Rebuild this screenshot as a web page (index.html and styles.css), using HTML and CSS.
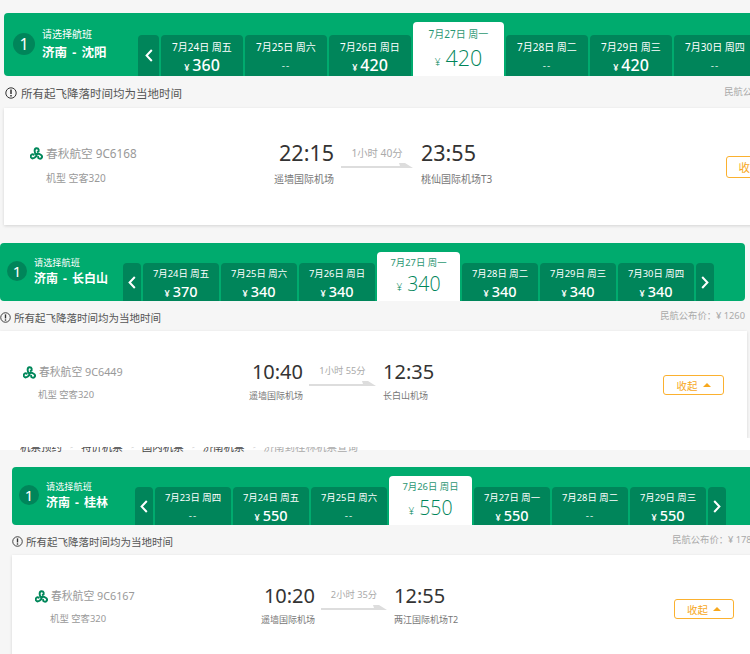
FILE: index.html
```html
<!DOCTYPE html>
<html lang="zh-CN">
<head>
    <meta charset="UTF-8">
    <title>请选择航班</title>
    <link rel="stylesheet" href="styles.css">
</head>
<body>
    <svg class="defs" width="0" height="0">
        <symbol id="logo" viewBox="0 0 14 14">
            <g fill="none" stroke="#00875a" stroke-width="2.1" stroke-linecap="round">
                <path d="M7 8C4.4 7 4.2 1.6 7 1.3C9.6 1.1 10.2 4.4 8.3 5.3"/>
                <path d="M7 8C4.4 7 4.2 1.6 7 1.3C9.6 1.1 10.2 4.4 8.3 5.3" transform="rotate(120 7 8)"/>
                <path d="M7 8C4.4 7 4.2 1.6 7 1.3C9.6 1.1 10.2 4.4 8.3 5.3" transform="rotate(240 7 8)"/>
            </g>
        </symbol>
        <symbol id="info" viewBox="0 0 12 12">
            <circle cx="6" cy="6" r="5.2" fill="none" stroke="#333" stroke-width="1"/>
            <path d="M6 2.6V7" stroke="#333" stroke-width="1.5"/>
            <path d="M6 8V9.5" stroke="#333" stroke-width="1.5"/>
        </symbol>
        <symbol id="prev" viewBox="0 0 8 13">
            <path d="M6.8 1L1.6 6.5L6.8 12" fill="none" stroke="#fff" stroke-width="2"/>
        </symbol>
        <symbol id="next" viewBox="0 0 8 13">
            <path d="M1.2 1L6.4 6.5L1.2 12" fill="none" stroke="#fff" stroke-width="2"/>
        </symbol>
    </svg>

    <!-- first search -->
    <section class="leg leg-large">
        <div class="bar">
            <div class="route">
                <span class="step">1</span>
                <div>
                    <p class="route-tip">请选择航班</p>
                    <p class="route-name">济南 - 沈阳</p>
                </div>
            </div>
            <a class="nav"><svg class="chevron"><use href="#prev"/></svg></a>
            <div class="tab"><p class="date">7月24日 周五</p><p class="price"><small>¥</small>360</p></div>
            <div class="tab"><p class="date">7月25日 周六</p><p class="price none">--</p></div>
            <div class="tab"><p class="date">7月26日 周日</p><p class="price"><small>¥</small>420</p></div>
            <div class="tab active"><p class="date">7月27日 周一</p><p class="price"><small>¥</small>420</p></div>
            <div class="tab"><p class="date">7月28日 周二</p><p class="price none">--</p></div>
            <div class="tab"><p class="date">7月29日 周三</p><p class="price"><small>¥</small>420</p></div>
            <div class="tab"><p class="date">7月30日 周四</p><p class="price none">--</p></div>
        </div>
        <div class="note">
            <p class="note-text"><svg class="info-icon"><use href="#info"/></svg>所有起飞降落时间均为当地时间</p>
            <p class="fare">民航公布价：¥ 1260</p>
        </div>
        <div class="card">
            <div class="airline">
                <p class="airline-name"><svg class="logo"><use href="#logo"/></svg>春秋航空 9C6168</p>
                <p class="plane">机型 空客320</p>
            </div>
            <div class="dep">
                <p class="time">22:15</p>
                <p class="airport">遥墙国际机场</p>
            </div>
            <div class="duration">
                <p>1小时 40分</p>
                <div class="arrow"></div>
            </div>
            <div class="arr">
                <p class="time">23:55</p>
                <p class="airport">桃仙国际机场T3</p>
            </div>
            <a class="fold">收起<i class="caret"></i></a>
        </div>
    </section>

    <!-- second search -->
    <section class="leg leg-second">
        <div class="bar">
            <div class="route">
                <span class="step">1</span>
                <div>
                    <p class="route-tip">请选择航班</p>
                    <p class="route-name">济南 - 长白山</p>
                </div>
            </div>
            <a class="nav"><svg class="chevron"><use href="#prev"/></svg></a>
            <div class="tab"><p class="date">7月24日 周五</p><p class="price"><small>¥</small>370</p></div>
            <div class="tab"><p class="date">7月25日 周六</p><p class="price"><small>¥</small>340</p></div>
            <div class="tab"><p class="date">7月26日 周日</p><p class="price"><small>¥</small>340</p></div>
            <div class="tab active"><p class="date">7月27日 周一</p><p class="price"><small>¥</small>340</p></div>
            <div class="tab"><p class="date">7月28日 周二</p><p class="price"><small>¥</small>340</p></div>
            <div class="tab"><p class="date">7月29日 周三</p><p class="price"><small>¥</small>340</p></div>
            <div class="tab"><p class="date">7月30日 周四</p><p class="price"><small>¥</small>340</p></div>
            <a class="nav"><svg class="chevron"><use href="#next"/></svg></a>
        </div>
        <div class="note">
            <p class="note-text"><svg class="info-icon"><use href="#info"/></svg>所有起飞降落时间均为当地时间</p>
            <p class="fare">民航公布价：¥ 1260</p>
        </div>
        <div class="card">
            <div class="airline">
                <p class="airline-name"><svg class="logo"><use href="#logo"/></svg>春秋航空 9C6449</p>
                <p class="plane">机型 空客320</p>
            </div>
            <div class="dep">
                <p class="time">10:40</p>
                <p class="airport">遥墙国际机场</p>
            </div>
            <div class="duration">
                <p>1小时 55分</p>
                <div class="arrow"></div>
            </div>
            <div class="arr">
                <p class="time">12:35</p>
                <p class="airport">长白山机场</p>
            </div>
            <a class="fold">收起<i class="caret"></i></a>
        </div>
    </section>

    <div class="crumbs">
        <div class="crumbs-clip">
            <span>机票预约</span><b>&gt;</b><span>特价机票</span><b>&gt;</b><span>国内机票</span><b>&gt;</b><span>济南机票</span><b>&gt;</b><span class="crumb-last">济南到桂林机票查询</span>
        </div>
    </div>

    <!-- third search -->
    <section class="leg leg-third">
        <div class="bar">
            <div class="route">
                <span class="step">1</span>
                <div>
                    <p class="route-tip">请选择航班</p>
                    <p class="route-name">济南 - 桂林</p>
                </div>
            </div>
            <a class="nav"><svg class="chevron"><use href="#prev"/></svg></a>
            <div class="tab"><p class="date">7月23日 周四</p><p class="price none">--</p></div>
            <div class="tab"><p class="date">7月24日 周五</p><p class="price"><small>¥</small>550</p></div>
            <div class="tab"><p class="date">7月25日 周六</p><p class="price none">--</p></div>
            <div class="tab active"><p class="date">7月26日 周日</p><p class="price"><small>¥</small>550</p></div>
            <div class="tab"><p class="date">7月27日 周一</p><p class="price"><small>¥</small>550</p></div>
            <div class="tab"><p class="date">7月28日 周二</p><p class="price none">--</p></div>
            <div class="tab"><p class="date">7月29日 周三</p><p class="price"><small>¥</small>550</p></div>
            <a class="nav"><svg class="chevron"><use href="#next"/></svg></a>
        </div>
        <div class="note">
            <p class="note-text"><svg class="info-icon"><use href="#info"/></svg>所有起飞降落时间均为当地时间</p>
            <p class="fare">民航公布价：¥ 1780</p>
        </div>
        <div class="card">
            <div class="airline">
                <p class="airline-name"><svg class="logo"><use href="#logo"/></svg>春秋航空 9C6167</p>
                <p class="plane">机型 空客320</p>
            </div>
            <div class="dep">
                <p class="time">10:20</p>
                <p class="airport">遥墙国际机场</p>
            </div>
            <div class="duration">
                <p>2小时 35分</p>
                <div class="arrow"></div>
            </div>
            <div class="arr">
                <p class="time">12:55</p>
                <p class="airport">两江国际机场T2</p>
            </div>
            <a class="fold">收起<i class="caret"></i></a>
        </div>
    </section>
</body>
</html>
```

FILE: styles.css
```css
html, body {
    margin: 0;
    height: 654px;
    overflow: hidden;
}
body {
    width: 750px;
    background-color: #f6f6f6;
    font-family: "Noto Sans", "Noto Sans CJK SC", sans-serif;
    color: #333;
}
p {
    margin: 0;
}
.defs {
    display: block;
    height: 0;
}

/* one search block, sizes are for the smaller two */
.leg {
    width: 745px;
}
.leg-large {
    width: 805px;
    margin-left: 4px;
    padding: 13px 0 8px;
}
.leg-second {
    padding-top: 10px;
}
.leg-third {
    margin-left: 12px;
    padding-top: 14px;
}

.bar {
    display: flex;
    align-items: flex-end;
    gap: 2px;
    height: 58px;
    background-color: #00ab6e;
    border-radius: 4px;
}
.leg-large .bar {
    height: 63px;
}
.route {
    display: flex;
    align-items: center;
    gap: 7px;
    align-self: stretch;
    width: 121px;
    padding-left: 7px;
    padding-bottom: 2px;
    box-sizing: border-box;
    color: #fff;
}
.leg-large .route {
    width: 132px;
    padding-left: 9px;
}
.step {
    display: block;
    width: 20px;
    height: 20px;
    line-height: 20px;
    border-radius: 50%;
    background-color: #00855a;
    text-align: center;
    font-size: 15px;
}
.leg-large .step {
    width: 22px;
    height: 22px;
    line-height: 22px;
    font-size: 16px;
}
.route-tip {
    font-size: 9.2px;
    line-height: 15px;
}
.route-name {
    font-size: 12px;
    line-height: 17px;
    font-weight: bold;
    word-spacing: 2px;
}
.leg-large .route-tip {
    font-size: 10px;
    line-height: 17px;
}
.leg-large .route-name {
    font-size: 12.5px;
    line-height: 19px;
}

.nav {
    display: flex;
    align-items: center;
    justify-content: center;
    flex: none;
    width: 18px;
    height: 38px;
    background-color: #00855a;
    border-radius: 4px 4px 0 0;
}
.leg-large .nav {
    width: 21px;
    height: 41px;
}
.chevron {
    width: 8px;
    height: 13px;
}
.tab {
    flex: none;
    width: 76px;
    height: 38px;
    padding-top: 3px;
    box-sizing: border-box;
    background-color: #00855a;
    border-radius: 4px 4px 0 0;
    color: #fff;
    text-align: center;
}
.leg-large .tab {
    width: 82px;
    height: 41px;
    padding-top: 4px;
}
.date {
    font-size: 9.4px;
    line-height: 16px;
}
.leg-large .date {
    font-size: 10px;
}
.price {
    font-size: 14.5px;
    line-height: 18px;
    font-weight: 500;
}
.leg-large .price {
    font-size: 16px;
    line-height: 21px;
}
.price small {
    font-size: 9px;
    margin-right: 3px;
}
.price.none {
    font-size: 10px;
    font-weight: 400;
    letter-spacing: 1px;
    opacity: .8;
}
.tab.active {
    width: 83px;
    height: 49px;
    background-color: #fff;
    color: #00855a;
}
.leg-large .tab.active {
    width: 91px;
    height: 54px;
    padding-top: 4px;
}
.tab.active .date {
    opacity: .85;
}
.tab.active .price {
    font-family: "Open Sans", "Noto Sans", sans-serif;
    font-size: 19.5px;
    line-height: 25px;
    font-weight: 300;
}
.leg-large .tab.active .price {
    font-size: 21.5px;
    line-height: 32px;
}
.tab.active small {
    font-size: 10px;
    margin-right: 5px;
}

.note {
    display: flex;
    justify-content: space-between;
    align-items: center;
    height: 30px;
}
.leg-large .note {
    height: 32px;
    padding-left: 1px;
}
.note-text {
    display: flex;
    align-items: center;
    gap: 3px;
    font-size: 10.5px;
    color: #555;
    padding-top: 2px;
}
.leg-large .note-text {
    font-size: 11.5px;
    gap: 4px;
}
.info-icon {
    width: 11px;
    height: 11px;
}
.leg-large .info-icon {
    width: 12px;
    height: 12px;
}
.fare {
    font-size: 9.3px;
    color: #aaa;
    padding-bottom: 2px;
}

.card {
    display: flex;
    align-items: flex-start;
    height: 107px;
    margin-right: -2px;
    padding: 28px 0 0 23px;
    box-sizing: border-box;
    background-color: #fff;
    box-shadow: 0 1px 3px rgba(0, 0, 0, .14);
}
.leg-large .card {
    height: 117px;
    padding: 32px 0 0 26px;
}
.airline {
    width: 220px;
    flex: none;
    color: #999;
}
.leg-large .airline {
    width: 244px;
}
.airline-name {
    display: flex;
    align-items: center;
    gap: 3px;
    font-size: 10.8px;
    line-height: 26px;
}
.leg-large .airline-name {
    font-size: 11.7px;
}
.logo {
    width: 13px;
    height: 13px;
}
.plane {
    margin-top: 2px;
    padding-left: 15px;
    font-size: 9.4px;
    line-height: 16px;
}
.leg-large .plane {
    margin-top: 4px;
    padding-left: 16px;
    font-size: 10px;
}
.dep {
    width: 60px;
    flex: none;
    text-align: right;
}
.arr {
    width: 280px;
    flex: none;
    margin-left: 7px;
}
.leg-large .arr {
    width: 305px;
    margin-left: 8px;
}
.time {
    font-size: 20px;
    line-height: 26px;
}
.leg-large .time {
    font-size: 21.5px;
}
.airport {
    margin-top: 3px;
    font-size: 9px;
    line-height: 16px;
    color: #777;
    white-space: nowrap;
}
.leg-large .airport {
    margin-top: 5px;
    font-size: 10px;
}
.duration {
    width: 67px;
    flex: none;
    margin-left: 6px;
    text-align: center;
    color: #aaa;
    font-size: 9.3px;
    line-height: 24px;
}
.leg-third .duration {
    width: 66px;
}
.leg-large .duration {
    width: 72px;
    margin-left: 7px;
    padding-top: 1px;
    font-size: 10.3px;
}
/* thin line with half an arrow head at the end */
.arrow {
    height: 5px;
    margin-top: -2px;
    background-color: #ddd;
    clip-path: polygon(0 3px, calc(100% - 13px) 3px, calc(100% - 14px) 0, calc(100% - 8px) 0, 100% 100%, 0 100%);
}
.fold {
    display: flex;
    align-items: center;
    justify-content: center;
    gap: 5px;
    flex: none;
    width: 61px;
    height: 20px;
    margin-top: 16px;
    box-sizing: border-box;
    border: 1px solid #fbb12f;
    border-radius: 3px;
    background-color: #fff;
    color: #f7a81d;
    font-size: 10.5px;
}
.leg-third .fold {
    width: 60px;
}
.leg-large .fold {
    height: 22px;
    font-size: 11.5px;
}
.caret {
    width: 0;
    height: 0;
    border-left: 4px solid transparent;
    border-right: 4px solid transparent;
    border-bottom: 4px solid #f7a81d;
}

/* breadcrumb cut off by the edge of the capture */
.crumbs {
    height: 15px;
    padding: 9px 0 0 20px;
    box-sizing: border-box;
    background: linear-gradient(#fff 12px, #f6f6f6 12px);
}
.crumbs-clip {
    display: flex;
    gap: 8px;
    height: 6px;
    overflow: hidden;
    font-size: 10.5px;
    line-height: 14px;
    color: #444;
}
.crumbs-clip span, .crumbs-clip b {
    margin-top: -7px;
    font-weight: normal;
}
.crumbs-clip b {
    font-size: 5px;
    color: #aaa;
}
.crumb-last {
    color: #aaa;
}
```
